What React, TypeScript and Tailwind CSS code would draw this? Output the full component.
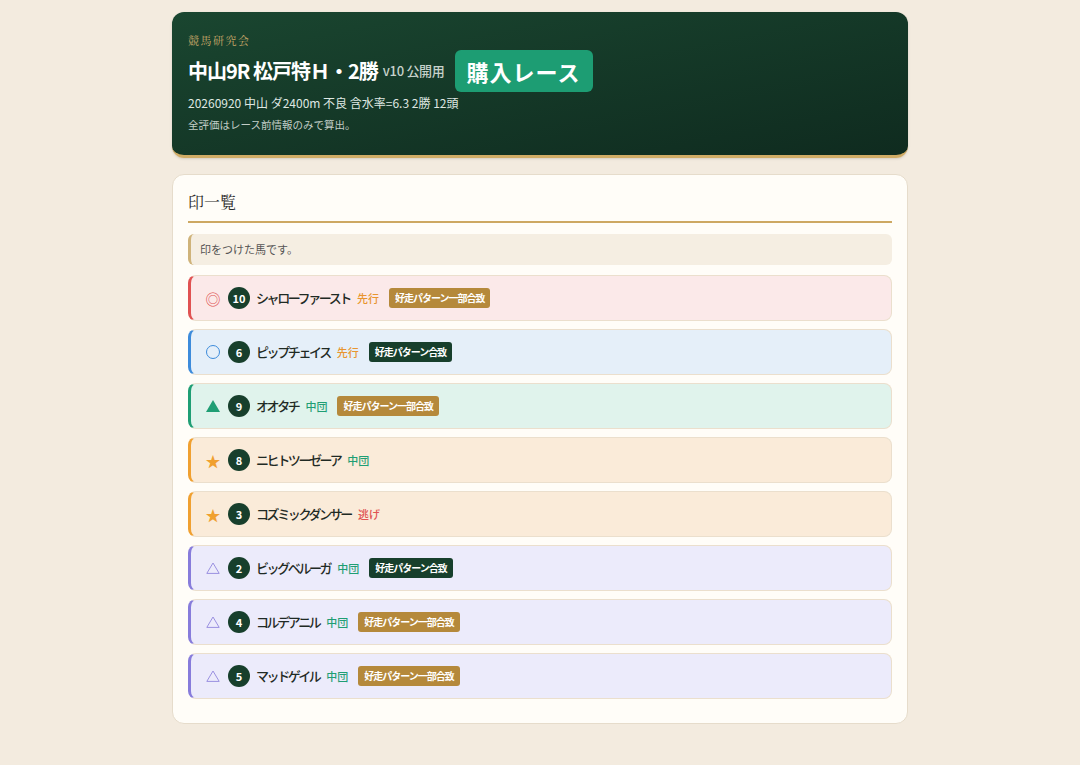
import React from 'react';

type Horse = {
  mark: string;
  num: number;
  name: string;
  style: string;
  badge?: 'full' | 'part';
  tone: 'red' | 'blue' | 'green' | 'orange' | 'purple';
};

const horses: Horse[] = [
  { mark: '◎', num: 10, name: 'シャローファースト', style: '先行', badge: 'part', tone: 'red' },
  { mark: '○', num: 6, name: 'ピップチェイス', style: '先行', badge: 'full', tone: 'blue' },
  { mark: '▲', num: 9, name: 'オオタチ', style: '中団', badge: 'part', tone: 'green' },
  { mark: '★', num: 8, name: 'ニヒトツーゼーア', style: '中団', tone: 'orange' },
  { mark: '★', num: 3, name: 'コズミックダンサー', style: '逃げ', tone: 'orange' },
  { mark: '△', num: 2, name: 'ビッグベルーガ', style: '中団', badge: 'full', tone: 'purple' },
  { mark: '△', num: 4, name: 'コルデアニル', style: '中団', badge: 'part', tone: 'purple' },
  { mark: '△', num: 5, name: 'マッドゲイル', style: '中団', badge: 'part', tone: 'purple' },
];

const rowTone = {
  red: 'bg-[#fbe9e9] border-l-[#e05252]',
  blue: 'bg-[#e5eff9] border-l-[#3d8bdb]',
  green: 'bg-[#e0f3ec] border-l-[#1f9e74]',
  orange: 'bg-[#faebd9] border-l-[#f0a030]',
  purple: 'bg-[#ecebfb] border-l-[#877cdb]',
};

const markTone = {
  red: 'text-[#e05252]',
  blue: 'text-[#3d8bdb]',
  green: 'text-[#1f9e74]',
  orange: 'text-[#f0a030]',
  purple: 'text-[#9a90e0]',
};

const styleTone: Record<string, string> = {
  先行: 'text-[#e8952f]',
  中団: 'text-[#1f9e74]',
  逃げ: 'text-[#e05252]',
};

function Mark({ h }: { h: Horse }) {
  if (h.mark === '○') {
    return <span className="w-[14px] h-[14px] rounded-full border border-[#3d8bdb]" />;
  }
  if (h.mark === '▲') {
    return (
      <svg width="14" height="12" viewBox="0 0 14 12">
        <polygon points="7,0 14,12 0,12" fill="#1f9e74" />
      </svg>
    );
  }
  if (h.mark === '△') {
    return (
      <svg width="14" height="12" viewBox="0 0 14 12">
        <polygon points="7,1 13.2,11.4 0.8,11.4" fill="none" stroke="#9a90e0" strokeWidth="1" />
      </svg>
    );
  }
  return <span className={`text-[15px] leading-none ${markTone[h.tone]}`}>{h.mark}</span>;
}

function Row({ h }: { h: Horse }) {
  return (
    <div
      className={`h-[46px] flex items-center pl-[15px] rounded-lg border border-[#ebdfcd] border-l-[3px] ${rowTone[h.tone]}`}
    >
      <div className="w-[14px] flex justify-center items-center">
        <Mark h={h} />
      </div>
      <span className="ml-[8px] w-[22px] h-[22px] rounded-full bg-[#173f2c] text-white text-[11px] font-bold flex items-center justify-center">
        {h.num}
      </span>
      <span className="ml-[6px] text-[13px] font-medium text-[#1f2a24] tracking-[-2.4px]">{h.name}</span>
      <span className={`ml-[7px] text-[11px] font-medium ${styleTone[h.style]}`}>{h.style}</span>
      {h.badge && (
        <span
          className={`ml-[10px] px-[6px] py-[3px] rounded-[3px] text-[10px] font-bold text-white leading-[14px] tracking-[-1px] ${
            h.badge === 'part' ? 'bg-[#b5893b]' : 'bg-[#173f2c]'
          }`}
        >
          {h.badge === 'part' ? '好走パターン一部合致' : '好走パターン合致'}
        </span>
      )}
    </div>
  );
}

export default function App() {
  return (
    <div
      className="min-h-[765px] bg-[#f3ebdf] pt-[12px] pb-[40px]"
      style={{ fontFamily: '"Noto Sans CJK JP", "Noto Sans", sans-serif' }}
    >
      <div className="w-[736px] mx-auto flex flex-col gap-[16px]">
        <header className="rounded-xl bg-gradient-to-br from-[#1a4630] to-[#0f2b1f] border-b-[3px] border-[#d0ac66] px-[16px] pt-[23px] pb-[23px] shadow-sm">
          <div className="text-[11px] tracking-[1.5px] text-[#c9a869] leading-none" style={{ fontFamily: '"Noto Serif CJK JP", "DejaVu Serif", serif' }}>
            競馬研究会
          </div>
          <div className="flex items-center mt-[4px]">
            <h1 className="text-[20px] font-bold text-white leading-none tracking-[-1px]">中山9R 松戸特Ｈ・2勝</h1>
            <span className="ml-[5px] text-[13px] text-[#c7d2cb] font-medium tracking-[-0.3px]">v10 公開用</span>
            <span className="ml-[10px] h-[42px] w-[138px] rounded-md bg-[#1d9d73] text-white text-[22px] font-bold flex items-center justify-center tracking-[1px]">
              購入レース
            </span>
          </div>
          <div className="mt-[3px] text-[12px] text-[#dfe7e2] leading-[16px]">20260920 中山 ダ2400m 不良 含水率=6.3 2勝 12頭</div>
          <div className="mt-[7px] text-[10.5px] text-[#c2cdc6] leading-[14px]">全評価はレース前情報のみで算出。</div>
        </header>

        <section className="rounded-xl bg-[#fffdf8] border border-[#e6dccb] px-[15px] pt-[15px] pb-[24px]">
          <h2
            className="text-[16px] text-[#2a2a2a] pb-[7px] border-b-2 border-[#cda862] leading-[24px]"
            style={{ fontFamily: '"Noto Serif CJK JP", "DejaVu Serif", serif' }}
          >
            印一覧
          </h2>
          <div className="mt-[11px] h-[31px] flex items-center rounded-md bg-[#f5eee2] border-l-[3px] border-[#cfb37a] px-[9px] text-[11px] text-[#555]">
            印をつけた馬です。
          </div>
          <div className="mt-[10px] flex flex-col gap-[8px]">
            {horses.map((h) => (
              <Row key={h.num} h={h} />
            ))}
          </div>
        </section>
      </div>
    </div>
  );
}
